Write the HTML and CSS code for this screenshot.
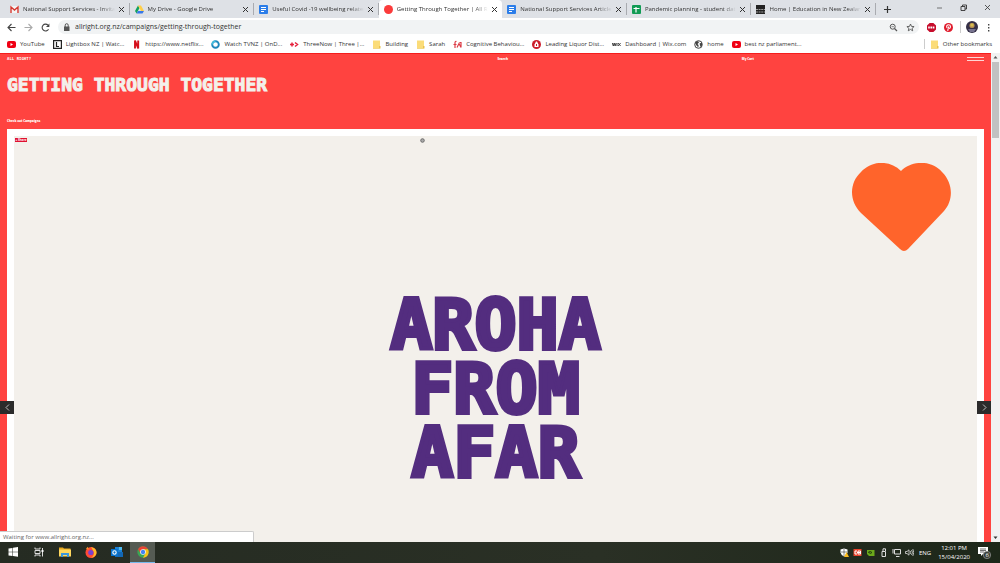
FILE: index.html
```html
<!DOCTYPE html>
<html lang="en">
<head>
    <meta charset="UTF-8">
    <meta name="viewport" content="width=device-width, initial-scale=1.0">
    <title>Getting Through Together | All Right?</title>
    <link rel="stylesheet" href="styles.css">
</head>
<body>
    <!-- Shared icons -->
    <svg class="sprite" aria-hidden="true">
        <symbol id="folder" viewBox="0 0 9 9"><path fill="#fbdc78" d="M1 .5h7v8H1z"/><path fill="#e9c14e" d="M7 6h1.5v2.5H1V8h6z"/></symbol>
        <symbol id="docs" viewBox="0 0 9 9"><rect width="9" height="9" rx="1" fill="#2b7de9"/><path stroke="#fff" d="M2 2.5h5M2 4.5h5M2 6.5h3"/></symbol>
        <symbol id="youtube" viewBox="0 0 9 9"><rect y="1" width="9" height="7" rx="2" fill="#f00014"/><path fill="#fff" d="M3.5 3v3L6 4.5z"/></symbol>
    </svg>

    <header class="browser">
        <div class="tab-strip">
            <div class="tabs">
                <div class="tab">
                    <svg class="icon" viewBox="0 0 9 9"><path fill="#f4f4f4" d="M0 1h9v7H0z"/><path fill="none" stroke="#d5382f" stroke-width="1.4" d="M1 8V2l3.500 3L8 2v6"/></svg>
                    <span class="tab-title">National Support Services - Invitation</span>
                    <button class="close" aria-label="Close tab"></button>
                </div>
                <div class="tab">
                    <svg class="icon" viewBox="0 0 9 9"><path fill="#12a15f" d="M3 .5 0 6l1.500 2.500L4.500 3z"/><path fill="#ffcf48" d="M3 .5h3L9 6H6z"/><path fill="#3878e8" d="M3 6h6L7.500 8.500h-6z"/></svg>
                    <span class="tab-title">My Drive - Google Drive</span>
                    <button class="close" aria-label="Close tab"></button>
                </div>
                <div class="tab">
                    <svg class="icon"><use href="#docs"/></svg>
                    <span class="tab-title">Useful Covid -19 wellbeing related</span>
                    <button class="close" aria-label="Close tab"></button>
                </div>
                <div class="tab active">
                    <svg class="icon" viewBox="0 0 9 9"><circle cx="4.500" cy="4.500" r="4.500" fill="#fb3b3b"/></svg>
                    <span class="tab-title">Getting Through Together | All Right</span>
                    <button class="close" aria-label="Close tab"></button>
                </div>
                <div class="tab">
                    <svg class="icon"><use href="#docs"/></svg>
                    <span class="tab-title">National Support Services Articles</span>
                    <button class="close" aria-label="Close tab"></button>
                </div>
                <div class="tab">
                    <svg class="icon" viewBox="0 0 9 9"><rect width="9" height="9" rx="1" fill="#119b54"/><path stroke="#fff" stroke-width="1.200" d="M1.500 3.500h6M4 2v5.500"/></svg>
                    <span class="tab-title">Pandemic planning - student data</span>
                    <button class="close" aria-label="Close tab"></button>
                </div>
                <div class="tab">
                    <svg class="icon" viewBox="0 0 9 9"><path fill="#222" d="M0 0h9v9H0z"/><path stroke="#bbb" stroke-width=".8" d="M0 4.500h9M0 7h9" stroke-dasharray="2 .6"/></svg>
                    <span class="tab-title">Home | Education in New Zealand</span>
                    <button class="close" aria-label="Close tab"></button>
                </div>
            </div>
            <button class="tool" aria-label="New tab"><svg class="icon" viewBox="0 0 9 9"><path stroke="#333" stroke-width="1.200" d="M4.500 1v7M1 4.500h7"/></svg></button>
            <div class="window-buttons">
                <button class="tool" aria-label="Minimise"><svg class="icon" viewBox="0 0 9 9"><path stroke="#555" d="M2 5h5" stroke-width=".8"/></svg></button>
                <button class="tool" aria-label="Restore"><svg class="icon" viewBox="0 0 9 9"><path fill="none" stroke="#333" stroke-width=".9" d="M2 3.500h4v4H2zM3.500 3.500V2h4v4H6"/></svg></button>
                <button class="tool" aria-label="Close"><svg class="icon" viewBox="0 0 9 9"><path stroke="#333" stroke-width=".8" d="m2 2 5 5M7 2 2 7"/></svg></button>
            </div>
        </div>

        <div class="toolbar">
            <button class="tool" aria-label="Back"><svg class="icon" viewBox="0 0 9 9"><path fill="none" stroke="#444" stroke-width="1.100" d="M8.500 4.500H1.500M4.500 1 1 4.500 4.500 8"/></svg></button>
            <button class="tool" aria-label="Forward"><svg class="icon" viewBox="0 0 9 9"><path fill="none" stroke="#aaa" stroke-width="1.100" d="M.5 4.500h7M4.500 1 8 4.500 4.500 8"/></svg></button>
            <button class="tool" aria-label="Reload"><svg class="icon" viewBox="0 0 9 9"><path fill="none" stroke="#444" stroke-width="1.100" d="M7.500 6.200A3.400 3.400 0 1 1 7 2.200"/><path fill="#444" d="M8.400.5v3.500H5z"/></svg></button>
            <div class="address">
                <svg class="icon" viewBox="0 0 9 9"><path fill="#555" d="M2 3.500h5.500V8H2z"/><path fill="none" stroke="#555" d="M3.200 4V2.200a1.500 1.500 0 0 1 3 0V4"/></svg>
                <input class="url" type="text" aria-label="Address" value="allright.org.nz/campaigns/getting-through-together">
                <button class="tool" aria-label="Zoom"><svg class="icon" viewBox="0 0 9 9"><circle cx="3.700" cy="3.700" r="2.500" fill="none" stroke="#555"/><path stroke="#555" stroke-width="1.200" d="m5.500 5.500 2.500 2.500"/><path stroke="#555" stroke-width=".7" d="M2.500 3.700h2.400"/></svg></button>
                <button class="tool" aria-label="Bookmark"><svg class="icon" viewBox="0 0 9 9"><path fill="none" stroke="#555" stroke-width=".9" d="m4.500 1 1 2.400 2.600.2-2 1.700.6 2.500-2.200-1.400-2.200 1.400.6-2.500-2-1.700 2.600-.2z"/></svg></button>
            </div>
            <div class="extensions">
                <svg class="icon" viewBox="0 0 9 9"><path fill="#c70d2c" d="M2.600 0h3.800L9 2.600v3.800L6.400 9H2.600L0 6.400V2.600z"/><path stroke="#fff" stroke-width="1.800" stroke-dasharray="1.600 .6" d="M1.200 4.500h6.800"/></svg>
                <svg class="icon" viewBox="0 0 9 9"><circle cx="4.500" cy="4.500" r="4.500" fill="#e01b2c"/><path fill="none" stroke="#fff" stroke-width="1.100" d="M3 5C2 2.500 3.500 1.800 4.600 1.800c2.400 0 2.400 3.600.4 3.600M4.600 3.500 3.700 7.800"/></svg>
            </div>
            <div class="profile">
                <svg class="avatar" viewBox="0 0 12 12"><circle cx="6" cy="6" r="6" fill="#353047"/><circle cx="6" cy="4.500" r="2.600" fill="#b08955"/><path fill="#d9bd4f" d="M4.500 2.500h3v3h-3z"/><path fill="#77738f" d="M2 8h8l-2 3H4z"/></svg>
                <button class="tool" aria-label="Menu"><svg class="icon" viewBox="0 0 9 9"><path fill="#444" d="M4 1h1.400v1.400H4zM4 4h1.400v1.400H4zM4 7h1.400v1.400H4z"/></svg></button>
            </div>
        </div>

        <nav class="bookmarks">
            <a href="#"><svg class="icon"><use href="#youtube"/></svg><span>YouTube</span></a>
            <a href="#"><svg class="icon" viewBox="0 0 9 9"><path fill="#fff" stroke="#222" stroke-width="1.200" d="M.6.6h7.800v7.800H.6z"/><path fill="none" stroke="#222" stroke-width="1.200" d="M3.500 2v4.500H6"/></svg><span>Lightbox NZ | Watc...</span></a>
            <a href="#"><svg class="icon" viewBox="0 0 9 9"><path fill="none" stroke="#d5101c" stroke-width="1.900" d="M3 8.500v-8l3.200 8v-8"/></svg><span>https://www.netflix...</span></a>
            <a href="#"><svg class="icon" viewBox="0 0 9 9"><circle cx="4.500" cy="4.500" r="3.300" fill="none" stroke="#1e87bb" stroke-width="1.900"/><path fill="none" stroke="#43c1df" stroke-width="1.500" d="M1.200 4.500A3.300 3.300 0 0 1 4.500 1.200"/></svg><span>Watch TVNZ | OnD...</span></a>
            <a href="#"><svg class="icon" viewBox="0 0 9 9"><path fill="none" stroke="#e6203c" stroke-width="1.500" d="M0 4.500h4M2 2.500v4M5 2.500l2.500 2L5 6.500"/></svg><span>ThreeNow | Three |...</span></a>
            <a href="#"><svg class="icon"><use href="#folder"/></svg><span>Building</span></a>
            <a href="#"><svg class="icon"><use href="#folder"/></svg><span>Sarah</span></a>
            <a href="#"><svg class="icon" viewBox="0 0 9 9"><path fill="none" stroke="#dc3c46" stroke-width="1.200" d="M3.500 1.500Q2 1 2 3v5M.5 4.500h3M4 7.500l2-4 2 4M6.500 2.500h1.500v5"/></svg><span>Cognitive Behaviou...</span></a>
            <a href="#"><svg class="icon" viewBox="0 0 9 9"><circle cx="4.500" cy="4.500" r="4.500" fill="#cc1d2b"/><path fill="#fff" d="M4 1.500h1l1.500 3V7h-4V4.500z"/><path fill="#cc1d2b" d="M4 4h1v2H4z"/></svg><span>Leading Liquor Dist...</span></a>
            <a href="#"><svg class="icon" viewBox="0 0 9 9"><path fill="none" stroke="#333" stroke-width=".9" d="m.3 3 1 3 .9-3 .9 3 1-3M5 3v3M6 3l2.600 3M8.600 3 6 6"/></svg><span>Dashboard | Wix.com</span></a>
            <a href="#"><svg class="icon" viewBox="0 0 9 9"><circle cx="4.500" cy="4.500" r="3.800" fill="#fff" stroke="#444"/><path fill="#444" d="M1 2.500 4 1l1 1.500L3.500 4l1 1v2.500L2 5zM5.500 3.500l2.500-1v3L6.500 7z"/></svg><span>home</span></a>
            <a href="#"><svg class="icon"><use href="#youtube"/></svg><span>best nz parliament...</span></a>
            <a class="other" href="#"><svg class="icon"><use href="#folder"/></svg><span>Other bookmarks</span></a>
        </nav>
    </header>

    <div class="viewport">
        <main class="site">
            <nav class="site-nav">
                <a class="logo" href="#">ALL RIGHT?</a>
                <a class="nav-link" href="#">Search</a>
                <a class="nav-link" href="#">My Cart</a>
                <button class="burger" aria-label="Menu"></button>
            </nav>
            <h1 class="site-title">GETTING THROUGH TOGETHER</h1>
            <a class="campaigns-link" href="#">Check out Campaigns</a>
            <section class="slider">
                <div class="poster">
                    <button class="share">+ Share</button>
                    <svg class="info" viewBox="0 0 5 5"><circle cx="2.500" cy="2.500" r="1.800" fill="#aaa" stroke="#666" stroke-width=".9"/></svg>
                    <svg class="heart" viewBox="0 0 99 89"><path fill="#ff642b" d="M49 8C60-3 80-3 90 9c12 12 11 29 2 39L56 86q-4 4-8 0L9 50C-3 38-3 20 9 9 20-3 38-3 49 8z"/></svg>
                    <h2 class="poster-text">AROHA<br>FROM<br>AFAR</h2>
                </div>
                <button class="arrow prev" aria-label="Previous"><svg class="icon" viewBox="0 0 9 9"><path fill="none" stroke="#ccc" stroke-width=".9" d="M6 1.500 3 4.500l3 3"/></svg></button>
                <button class="arrow next" aria-label="Next"><svg class="icon" viewBox="0 0 9 9"><path fill="none" stroke="#ccc" stroke-width=".9" d="m3 1.500 3 3-3 3"/></svg></button>
            </section>
        </main>
        <div class="scrollbar">
            <svg class="scroll-arrow" viewBox="0 0 9 9"><path fill="#555" d="m4.500 3 2 2.500h-4z"/></svg>
            <div class="thumb"></div>
            <svg class="scroll-arrow" viewBox="0 0 9 9"><path fill="#333" d="m4.500 6 2-2.500h-4z"/></svg>
        </div>
        <div class="status">Waiting for www.allright.org.nz...</div>
    </div>

    <footer class="taskbar">
        <div class="apps">
            <button class="app" aria-label="Start"><svg viewBox="0 0 12 12"><path fill="#fff" d="m1.500 2.500 4-.6v3.800h-4zM6 1.800l5-.8v4.700H6zM1.500 6.200h4V10l-4-.6zM6 6.200h5v4.600L6 10z"/></svg></button>
            <button class="app" aria-label="Task view"><svg viewBox="0 0 12 12"><path fill="none" stroke="#ddd" d="M2 4.500h5v3H2zM2 1.500v1.500h5V1.500M2 10.500V9h5v1.500M9.500 2v8.500"/><path fill="#fff" d="M8.500 4h2v2h-2z"/></svg></button>
            <button class="app" aria-label="File Explorer"><svg viewBox="0 0 12 12"><path fill="#e9a91f" d="M0 1.500h4l1 1h6.500V10H0z"/><path fill="#ffd75e" d="M0 3.500h12v7H0z"/><path fill="#3b97dc" d="M2 7h8v4H8V9H4v2H2z"/></svg></button>
            <button class="app" aria-label="Firefox"><svg viewBox="0 0 12 12"><circle cx="6" cy="6.500" r="5.500" fill="#ff4a36"/><path fill="#ffbd28" d="M6 1q5 1 5.500 5T6 12Q10 9 8.500 5.500T6 1z"/><path fill="#ff9420" d="M1 3 2.500.8 4 3.500z"/><circle cx="5.800" cy="6.500" r="2.600" fill="#7a43cf"/></svg></button>
            <button class="app" aria-label="Outlook"><svg viewBox="0 0 12 12"><path fill="#1a83d8" d="M4 1h7v6H4z"/><path fill="#50bdf1" d="M8 1h3v3H8z"/><path fill="#1267b5" d="M4 6h8v5H4z"/><path fill="#0873cd" d="M0 3h7v7H0z"/><circle cx="3.500" cy="6.500" r="1.700" fill="none" stroke="#fff" stroke-width="1.100"/></svg></button>
            <button class="app current" aria-label="Chrome"><svg viewBox="0 0 12 12"><circle cx="6" cy="6" r="5.700" fill="#3aa655"/><path fill="#e94335" d="M1 3.300A5.700 5.700 0 0 1 11 3.300H6L3.600 7.400z"/><path fill="#fbc116" d="M11 3.300A5.700 5.700 0 0 1 6 11.700L8.400 7.400 6 3.300z"/><circle cx="6" cy="6" r="2.800" fill="#fff"/><circle cx="6" cy="6" r="2.200" fill="#4384f3"/></svg></button>
        </div>
        <div class="tray">
            <svg class="icon" viewBox="0 0 9 9"><path fill="#fff" d="m4 .5 3.500 1v3Q7 7.500 4 8.500 1 7 .5 4.500v-3z"/><path stroke="#333" stroke-width=".6" d="M4 1v7M1 4h6"/><path fill="#fcba1e" d="m6.500 4 2.500 5H4z"/></svg>
            <svg class="icon" viewBox="0 0 9 9"><path fill="#e9432b" d="M.5 1h8v7h-8z"/><path fill="none" stroke="#fff" d="M4 3H2v3h2M5 3h2.500v3H5zM4 4.500h3"/></svg>
            <svg class="icon" viewBox="0 0 9 9"><path fill="#6caa1b" d="M1 2h7.500v6H3L1 6z"/><path fill="none" stroke="#21400c" d="M2 4.500Q4 2.500 6 4.500 4 6.500 3 4.500"/></svg>
            <svg class="icon" viewBox="0 0 9 9"><path fill="none" stroke="#ddd" d="M3 3.500h3.500v5H3zM4 3V.8h2.500V3"/></svg>
            <svg class="icon" viewBox="0 0 9 9"><path fill="none" stroke="#ddd" d="M2.500 1.500h6v4.500h-6zM4 8.500h3.500M1 1v4.500"/></svg>
            <svg class="icon" viewBox="0 0 9 9"><path fill="none" stroke="#ddd" stroke-width=".8" d="M.5 3.500H2L4 1.800v5.400L2 5.500H.5zM5.200 3q1 1.500 0 3M6.500 2q2 2.500 0 5M7.800 1q2 3.500 0 7"/></svg>
            <span class="language">ENG</span>
            <div class="clock"><time>12:01 PM</time><time>15/04/2020</time></div>
            <button class="notices" aria-label="Notifications"><svg viewBox="0 0 13 13"><path fill="#fff" d="M0 1h10v7H5L3 10V8H0z"/><path stroke="#333" stroke-width=".7" d="M2 3h6M2 4.500h6M2 6h4"/><circle cx="9" cy="9" r="3.700" fill="#3b3f38" stroke="#aaa" stroke-width=".6"/></svg><span class="count">6</span></button>
        </div>
    </footer>
</body>
</html>
```
FILE: styles.css
```css
/* Base */
* {
    box-sizing: border-box;
}

body {
    display: flex;
    flex-direction: column;
    height: 100vh;
    margin: 0;
    overflow: hidden;
    font-family: "Open Sans", sans-serif;
    font-size: 6px;
    line-height: 10px;
    color: #333;
}

button {
    display: flex;
    align-items: center;
    justify-content: center;
    padding: 0;
    border: 0;
    background: none;
    font: inherit;
    color: inherit;
}

a {
    color: inherit;
    text-decoration: none;
}

svg {
    display: block;
    flex: none;
}

.sprite {
    position: absolute;
    width: 0;
    height: 0;
}

.icon {
    width: 9px;
    height: 9px;
}

/* Tabs */
.tab-strip {
    display: flex;
    height: 18px;
    background: #dee1e6;
}

.tabs {
    display: flex;
    flex: 1;
    min-width: 0;
    padding-left: 5px;
}

.tab {
    display: flex;
    flex: 1;
    align-items: center;
    gap: 4px;
    min-width: 0;
    padding: 0 5px;
    border-right: 1px solid #a9abb0;
    border-image: linear-gradient(transparent 20%, #a9abb0 20%, #a9abb0 80%, transparent 80%) 1;
}

.tab.active {
    background: #fff;
    border: 0;
    border-radius: 4px 4px 0 0;
}

.tab-title {
    flex: 1;
    overflow: hidden;
    white-space: nowrap;
    -webkit-mask-image: linear-gradient(to right, #000 85%, transparent);
    mask-image: linear-gradient(to right, #000 85%, transparent);
}

.close {
    width: 5px;
    height: 5px;
    background:
        linear-gradient(45deg, transparent 42%, #333 42%, #333 58%, transparent 58%),
        linear-gradient(-45deg, transparent 42%, #333 42%, #333 58%, transparent 58%);
}

.tab-strip > .tool {
    margin-left: 7px;
}

.window-buttons {
    display: flex;
    gap: 15px;
    height: 15px;
    margin: 0 8px 0 43px;
}

/* Toolbar */
.toolbar {
    display: flex;
    align-items: center;
    gap: 8px;
    height: 18px;
    padding: 0 7px;
    background: #fff;
}

.address {
    display: flex;
    flex: 1;
    align-items: center;
    gap: 4px;
    height: 14px;
    padding: 0 4px;
    border-radius: 7px;
    background: #f1f3f4;
}

.address .tool {
    margin-left: 4px;
}

.url {
    flex: 1;
    min-width: 0;
    padding: 0;
    border: 0;
    outline: 0;
    background: none;
    font: inherit;
    font-size: 7px;
    color: #333;
}

.extensions {
    display: flex;
    gap: 8px;
    padding-right: 7px;
}

.profile {
    display: flex;
    align-items: center;
    gap: 6px;
    margin-left: -8px;
    padding-left: 5px;
    border-left: 1px solid #ccc;
}

.avatar {
    width: 12px;
    height: 12px;
}

/* Bookmarks bar */
.bookmarks {
    display: flex;
    align-items: center;
    gap: 8px;
    height: 17px;
    padding: 0 8px 1px 7px;
    background: #fff;
    white-space: nowrap;
}

.bookmarks a {
    display: flex;
    align-items: center;
    gap: 4px;
}

.bookmarks .other {
    margin-left: auto;
    padding-left: 5px;
    border-left: 1px solid #ccc;
}

/* Web page */
.viewport {
    position: relative;
    display: flex;
    flex: 1;
    min-height: 0;
}

.site {
    display: flex;
    flex: 1;
    flex-direction: column;
    padding: 2px 7px 0;
    border-top: 1px solid #f51d1d;
    background: #ff4340;
    color: #fff;
}

.site-nav {
    position: relative;
    display: grid;
    grid-template-columns: 2fr 1fr 1fr;
    height: 6px;
    font-size: 3px;
    font-weight: 800;
    line-height: 6px;
}

.nav-link {
    padding-left: 2px;
}

.logo {
    font-family: "DejaVu Sans Mono", monospace;
    font-size: 4px;
}

.burger {
    position: absolute;
    top: 1px;
    right: 0;
    width: 17px;
    height: 4px;
    border: solid #ffd5d4;
    border-width: 1px 0;
}

.site-title {
    margin: 8px 0 0;
    font-family: "DejaVu Sans Mono", monospace;
    font-size: 18px;
    line-height: 30px;
    color: #f3f0eb;
    -webkit-text-stroke: 1px #f3f0eb;
}

.campaigns-link {
    margin: 18px 0 5px;
    font-size: 3px;
    font-weight: 800;
    line-height: 6px;
}

.slider {
    position: relative;
    display: flex;
    flex: 1;
    min-height: 0;
    padding: 7px 7px 0;
    background: #fff;
}

.poster {
    position: relative;
    flex: 1;
    padding-top: 157px;
    background: #f3f0eb;
}

.poster-text {
    margin: 0;
    font-family: "DejaVu Sans Mono", monospace;
    font-size: 70px;
    line-height: 64px;
    text-align: center;
    color: #532d7f;
    -webkit-text-stroke: 4px #532d7f;
}

.heart {
    position: absolute;
    top: 27px;
    right: 26px;
    width: 99px;
    height: 89px;
}

.share {
    position: absolute;
    top: 2px;
    left: 1px;
    width: 12px;
    height: 4px;
    background: #e01030;
    font-size: 3px;
    font-weight: 700;
    line-height: 4px;
    color: #fff;
}

.info {
    position: absolute;
    top: 2px;
    left: 42%;
    width: 5px;
    height: 5px;
    margin-left: 2px;
}

.arrow {
    position: absolute;
    top: 272px;
    width: 14px;
    height: 13px;
    background: #2b2b2b;
}

.prev {
    left: -7px;
}

.next {
    right: -7px;
}

.scrollbar {
    display: flex;
    flex-direction: column;
    width: 9px;
    background: #f1f1f1;
}

.scroll-arrow {
    width: 9px;
    height: 9px;
}

.thumb {
    height: 76px;
    margin: 0 1px auto;
    background: #c1c1c1;
}

.status {
    position: absolute;
    bottom: 0;
    left: 0;
    width: 254px;
    padding: 0 3px;
    border: 1px solid #ccc;
    border-width: 1px 1px 0 0;
    border-radius: 0 2px 0 0;
    background: #fff;
    color: #666;
}

/* Taskbar */
.taskbar {
    display: flex;
    justify-content: space-between;
    height: 21px;
    background: linear-gradient(to right, #252b22, #2a3025 60%, #1d2719);
    color: #fff;
}

.apps {
    display: flex;
    gap: 1px;
}

.app {
    width: 25px;
    border-bottom: 1px solid transparent;
}

.app svg {
    width: 12px;
    height: 12px;
}

.app.current {
    border-color: #76b9ed;
    background: #555b53;
}

.tray {
    display: flex;
    align-items: center;
    gap: 4px;
    padding-right: 9px;
}

.language {
    margin: 0 3px 0 1px;
}

.clock {
    display: flex;
    flex-direction: column;
    text-align: center;
    line-height: 9px;
}

.notices {
    position: relative;
    margin-left: 4px;
}

.notices svg {
    width: 13px;
    height: 13px;
}

.count {
    position: absolute;
    right: 2px;
    bottom: 0;
    line-height: 8px;
}
```
